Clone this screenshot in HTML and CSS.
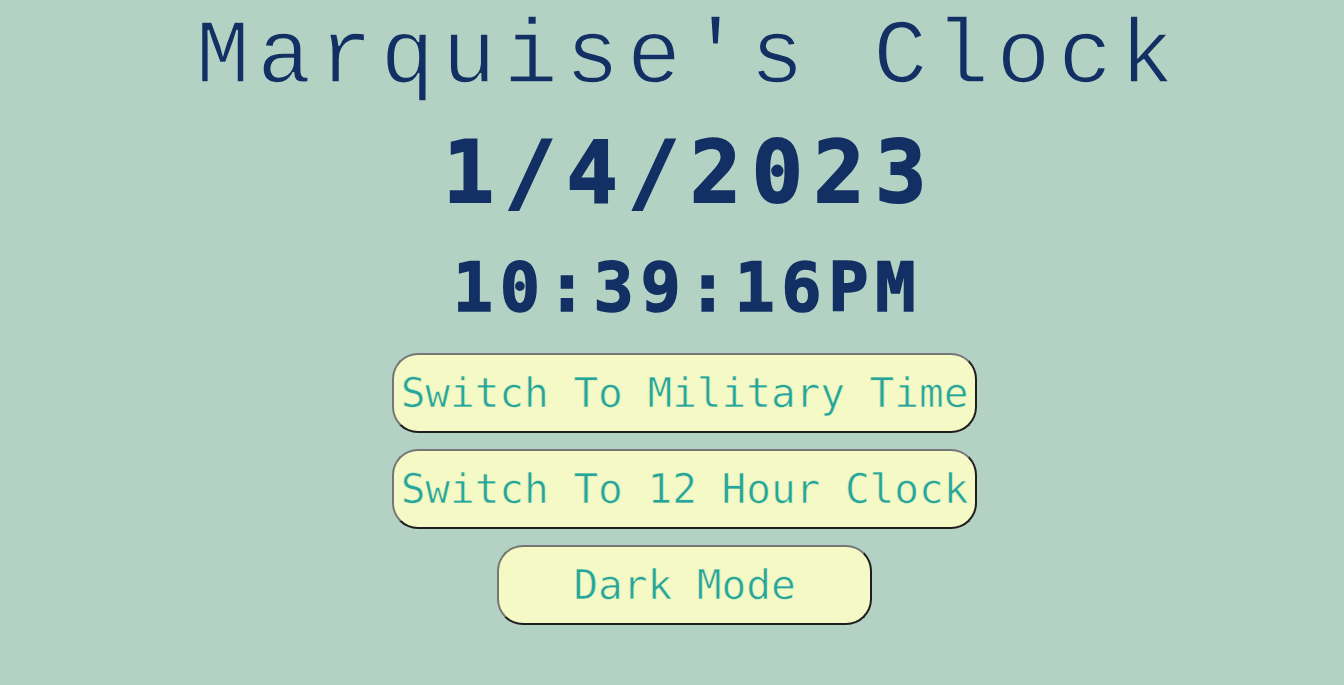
FILE: index.html
```html
<!DOCTYPE html>
<html lang="en">
<head>
<meta charset="utf-8">
<title>Marquise's Clock</title>
<link rel="stylesheet" href="styles.css">
</head>
<body>
<main class="clock">
  <h1 class="title">Marquise's Clock</h1>
  <div class="date">1/4/2023</div>
  <div class="time">10:39:16PM</div>
  <div class="controls">
    <button class="btn" type="button">Switch To Military Time</button>
    <button class="btn" type="button">Switch To 12 Hour Clock</button>
    <button class="btn btn-narrow" type="button">Dark Mode</button>
  </div>
</main>
</body>
</html>
```

FILE: styles.css
```css
html, body {
  margin: 0;
  padding: 0;
  background: #b4d2c4;
  height: 100%;
}

.clock {
  display: flex;
  flex-direction: column;
  align-items: center;
  padding-top: 6px;
  padding-left: 25px;
  color: #123064;
}

.title {
  margin: 2px 0 0;
  padding-left: 8px;
  font-family: "Liberation Mono", "Courier New", monospace;
  font-weight: normal;
  font-size: 90px;
  line-height: 100px;
  letter-spacing: 7.6px;
  white-space: pre;
  -webkit-text-stroke: 1.6px #b4d2c4;
}

.date {
  margin-top: 15px;
  padding-left: 11px;
  font-family: "DejaVu Sans Mono", monospace;
  font-weight: bold;
  font-size: 85px;
  line-height: 100px;
  letter-spacing: 10.6px;
  -webkit-text-stroke: 2px #123064;
}

.time {
  margin-top: 25px;
  padding-left: 6px;
  font-family: "DejaVu Sans Mono", monospace;
  font-weight: bold;
  font-size: 67px;
  line-height: 80px;
  letter-spacing: 6.6px;
  -webkit-text-stroke: 1.5px #123064;
}

.controls {
  margin-top: 25px;
  display: flex;
  flex-direction: column;
  align-items: center;
  gap: 16px;
}

.btn {
  box-sizing: border-box;
  height: 80px;
  width: 585px;
  padding: 0;
  background: #f5f9c5;
  color: #26a69a;
  font-family: "DejaVu Sans Mono", monospace;
  font-size: 41px;
  border: 2px solid;
  border-color: #767676 #1e1e1e #1e1e1e #767676;
  border-radius: 26px;
  cursor: pointer;
  -webkit-text-stroke: 0.6px #f5f9c5;
}

.btn-narrow {
  width: 375px;
}
```
